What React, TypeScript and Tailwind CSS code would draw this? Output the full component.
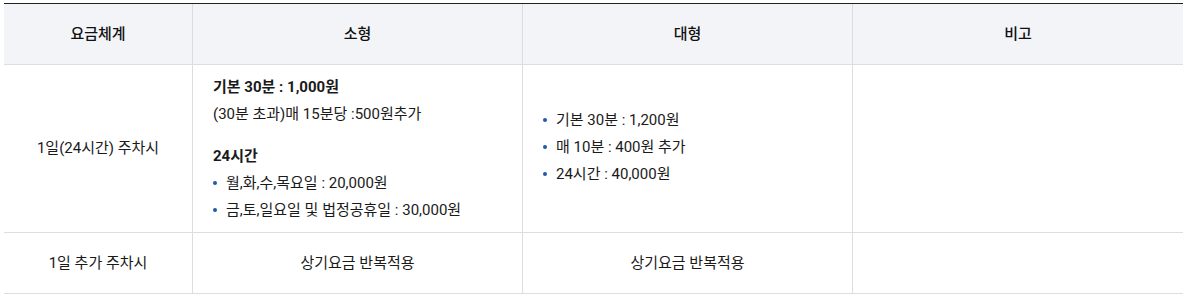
export default function App() {
  const font = { fontFamily: 'Roboto, "Noto Sans CJK KR", sans-serif' };

  const Bullet = ({ children }: { children: React.ReactNode }) => (
    <li className="flex items-center h-[27px]">
      <span className="w-[4px] h-[4px] rounded-full bg-[#1f5aa6] mr-[9px] shrink-0"></span>
      <span>{children}</span>
    </li>
  );

  return (
    <div className="bg-white w-[1184px] h-[297px] pt-[3px] pl-[4px]" style={font}>
      <div className="w-[1179px] border-t border-[#222] text-[15px] text-[#1a1a1a]">
        {/* header */}
        <div className="grid grid-cols-[188px_330px_330px_331px] h-[61px] bg-[#f3f4f8] border-b border-[#dcdde1] font-medium text-[#111]">
          <div className="flex items-center justify-center">요금체계</div>
          <div className="flex items-center justify-center border-l border-[#dcdde1]">소형</div>
          <div className="flex items-center justify-center border-l border-[#dcdde1]">대형</div>
          <div className="flex items-center justify-center border-l border-[#dcdde1]">비고</div>
        </div>

        {/* row 1 */}
        <div className="grid grid-cols-[188px_330px_330px_331px] h-[168px] border-b border-[#dcdde1]">
          <div className="flex items-center justify-center">1일(24시간) 주차시</div>
          <div className="flex flex-col justify-center border-l border-[#dcdde1] pl-[20px]">
            <p className="h-[27px] flex items-center font-bold">기본 30분 : 1,000원</p>
            <p className="h-[27px] flex items-center">(30분 초과)매 15분당 :500원추가</p>
            <p className="h-[27px] flex items-center font-bold mt-[15px]">24시간</p>
            <ul>
              <Bullet>월,화,수,목요일 : 20,000원</Bullet>
              <Bullet>금,토,일요일 및 법정공휴일 : 30,000원</Bullet>
            </ul>
          </div>
          <div className="flex flex-col justify-center border-l border-[#dcdde1] pl-[20px] pb-[3px]">
            <ul>
              <Bullet>기본 30분 : 1,200원</Bullet>
              <Bullet>매 10분 : 400원 추가</Bullet>
              <Bullet>24시간 : 40,000원</Bullet>
            </ul>
          </div>
          <div className="border-l border-[#dcdde1]"></div>
        </div>

        {/* row 2 */}
        <div className="grid grid-cols-[188px_330px_330px_331px] h-[61px] border-b border-[#dcdde1]">
          <div className="flex items-center justify-center">1일 추가 주차시</div>
          <div className="flex items-center justify-center border-l border-[#dcdde1]">상기요금 반복적용</div>
          <div className="flex items-center justify-center border-l border-[#dcdde1]">상기요금 반복적용</div>
          <div className="border-l border-[#dcdde1]"></div>
        </div>
      </div>
    </div>
  );
}
